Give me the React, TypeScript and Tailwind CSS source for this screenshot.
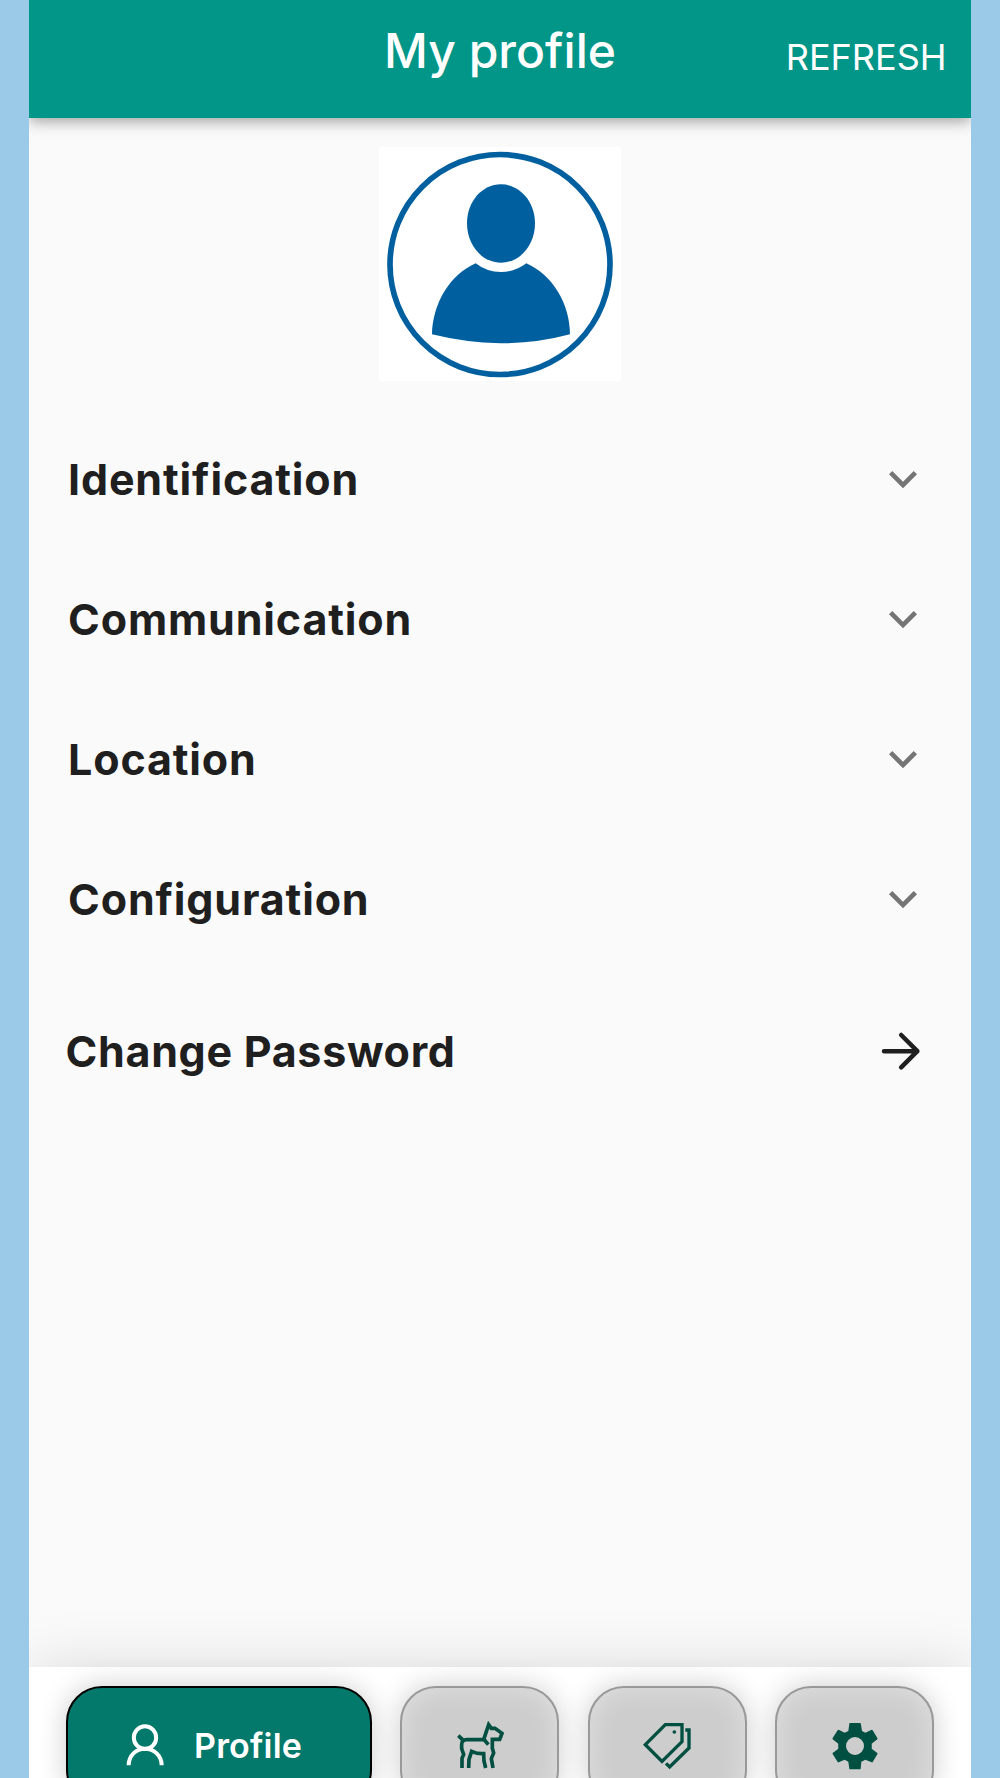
import React from "react";

const sections = ["Identification", "Communication", "Location", "Configuration"];

function Avatar() {
  return (
    <svg className="block h-[234px] w-[242px] bg-white" viewBox="27 49 726 702" fill="#005f9f">
      <circle cx="390" cy="401.5" r="330" fill="none" stroke="#005f9f" strokeWidth="17" />
      <path d="M393 161C450 161 495 213 495 278C495 344 450 396 393 396C336 396 291 344 291 278C291 213 336 161 393 161Z" />
      <path d="M317 398Q350 424 393 424Q435 424 469 398C548 433 600 520 600 611Q500 638 392 638Q286 636 186 611C188 520 238 433 317 398Z" />
    </svg>
  );
}

function Chevron() {
  return (
    <svg className="size-14" viewBox="0 0 24 24" fill="#757575">
      <path d="M16.59 8.59 12 13.17 7.41 8.59 6 10l6 6 6-6z" />
    </svg>
  );
}

function Arrow() {
  return (
    <svg
      className="h-[40px] w-[40px]"
      viewBox="62 92 120 120"
      fill="none"
      stroke="#1f1f1f"
      strokeWidth="13.5"
      strokeLinecap="round"
      strokeLinejoin="round"
    >
      <path d="M71 152.5H171M122.500 104L171 152.500L122.500 201" />
    </svg>
  );
}

function PersonIcon() {
  return (
    <svg className="h-[42px] w-[38px]" viewBox="378 254 114 126" fill="none" stroke="#fff" strokeWidth="12">
      <ellipse cx="435" cy="295" rx="33.500" ry="34" />
      <path d="M386 378C386 349 408 328 435 328S485 349 485 378" />
    </svg>
  );
}

function DogIcon() {
  return (
    <svg className="size-[50px]" viewBox="225 180 150 150" fill="none" stroke="#004f40" strokeWidth="11">
      <path d="M235 224L250 238M246 321V292L251 280L245 263V250Q245 236 260 236H311L326 191L334 202H345L366 217L359 235H337V262L341 276L334 293L339 321" />
      <path d="M311 234L325 251M266 321L267 295L275 271Q292 279 311 278L312 300L317 321" />
    </svg>
  );
}

function TagsIcon() {
  return (
    <svg className="size-[50px]" viewBox="217 185 150 150" fill="none" stroke="#004f40" strokeWidth="10">
      <path d="M287 196H337V247L277 306L227 256Z" />
      <path d="M347 212H358V266L300 323L289 312" />
      <circle cx="314" cy="218" r="5.500" fill="#004f40" stroke="none" />
    </svg>
  );
}

function GearIcon() {
  return (
    <svg className="size-[50px]" viewBox="210 244 150 150" fill="#004f40">
      <path
        fillRule="evenodd"
        d="M270 250H300Q302 250 302.500 252L306 274L316 279L335 270Q337 270 338 272L352 295Q353 297 352 299L335 312Q336 319 335 327L352 340Q353 342 352 344L338 367Q337 369 335 368L316 360L304 366L302 387Q301 389 299 389H270Q268 389 268 387L265 366L254 360L236 368Q234 369 233 367L218 343Q217 341 218 340L235 327Q234 319 235 312L218 299Q217 297 218 295L233 272Q234 270 236 270L254 279L265 274L268 252Q268 250 270 250ZM285 292A27 27 0 1 0 285 346A27 27 0 1 0 285 292Z"
      />
    </svg>
  );
}

function NavButton({ children }: { children: React.ReactNode }) {
  return (
    <button className="flex h-[120px] w-[159px] justify-center rounded-[36px] border-2 border-[#999] bg-[#cdcdcd] pt-[33px] shadow-[0_0_28px_rgba(0,0,0,0.2),inset_0_0_28px_rgba(255,255,255,0.4)]">
      {children}
    </button>
  );
}

export default function App() {
  return (
    <div className="h-[1778px] overflow-hidden bg-[#9acae8] px-[29px] font-['Inter',sans-serif]">
      <div className="flex h-full flex-col overflow-hidden bg-[#fafafa]">
        <header className="z-10 grid h-[118px] shrink-0 grid-cols-[1fr_auto_1fr] bg-[#029688] text-white shadow-[0_3px_14px_rgba(0,0,0,0.38)]">
          <span />
          <h1 className="mt-[22px] text-[48px] leading-[58px] font-medium tracking-[0.050px]">My profile</h1>
          <button className="mt-[35px] mr-[24.500px] self-start justify-self-end text-[36px] leading-[44px] font-normal tracking-[0px]">
            REFRESH
          </button>
        </header>
        <main className="flex flex-1 flex-col">
          <div className="mt-[28.500px] flex justify-center">
            <Avatar />
          </div>
          <div className="mt-[28px]">
            {sections.map((name) => (
              <button key={name} className="flex h-[140px] w-full items-center justify-between pr-[40px] pl-[39px] text-[#1f1f1f]">
                <span className="mt-[1px] text-[43px] leading-[56px] font-[650] tracking-[0.850px]">{name}</span>
                <Chevron />
              </button>
            ))}
          </div>
          <button className="mt-[12px] flex h-[140px] items-center justify-between pr-[50.500px] pl-[36.500px] text-[#1f1f1f]">
            <span className="mt-[1px] text-[43px] leading-[56px] font-[650] tracking-[0.700px]">Change Password</span>
            <Arrow />
          </button>
        </main>
        <nav className="flex h-[111px] shrink-0 justify-between bg-white pt-[19px] pr-[37px] pl-[36.500px] shadow-[0_0_60px_rgba(0,0,0,0.13)]">
          <button className="flex h-[120px] w-[306px] rounded-[36px] border-2 border-black bg-[#02796b] pt-[36px] pl-[58.500px] text-white shadow-[0_0_28px_rgba(0,0,0,0.2)]">
            <PersonIcon />
            <span className="mt-[1px] ml-[30px] text-[34px] leading-[42px] font-semibold tracking-[0.200px]">Profile</span>
          </button>
          <NavButton>
            <DogIcon />
          </NavButton>
          <NavButton>
            <TagsIcon />
          </NavButton>
          <NavButton>
            <GearIcon />
          </NavButton>
        </nav>
      </div>
    </div>
  );
}
